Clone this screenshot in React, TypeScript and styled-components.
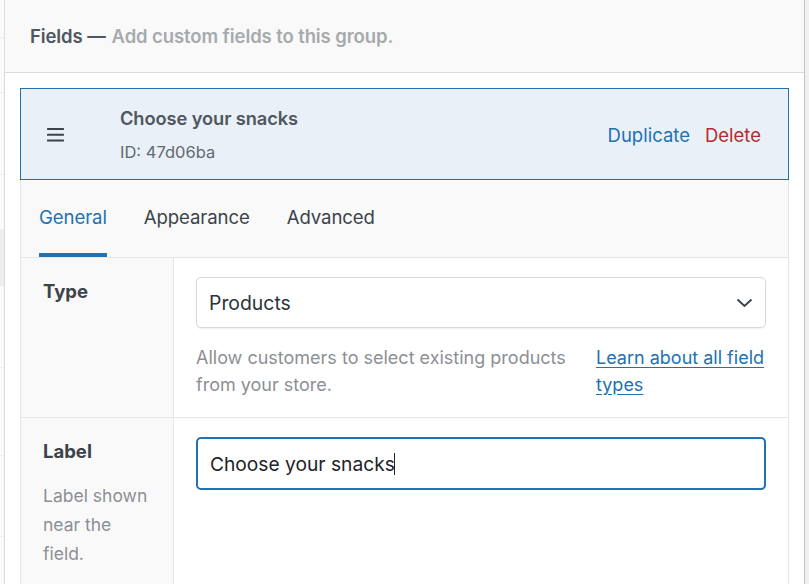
import styled, { createGlobalStyle } from "styled-components";

const GlobalStyle = createGlobalStyle`
  html, body {
    margin: 0;
    padding: 0;
    background: #f0f0f0;
  }
  body {
    font-family: Inter, "Noto Sans", "Liberation Sans", sans-serif;
    -webkit-font-smoothing: antialiased;
  }
`;

const Page = styled.div`
  display: flex;
  height: 584px;
  overflow: hidden;
  background: #f0f0f0;
`;

const SideStrip = styled.div`
  width: 4px;
  flex: none;
  background: #fafafa;
  border-right: 1px solid #dcdcde;
  display: flex;
  flex-direction: column;
`;

const StripRow = styled.div<{ $h: number; $shade?: boolean }>`
  height: ${p => p.$h}px;
  flex: none;
  border-bottom: 1px solid #ececec;
  background: ${p => (p.$shade ? "#ededed" : "transparent")};
`;

const Panel = styled.div`
  flex: 1;
  display: flex;
  flex-direction: column;
  background: #fff;
  border-right: 1px solid #c3c4c7;
  min-width: 0;
`;

const PanelHeader = styled.div`
  height: 72px;
  flex: none;
  display: flex;
  align-items: center;
  padding: 0 25px;
  background: #f9f9f9;
  border-bottom: 1px solid #dcdcde;
  font-size: 18.5px;
  font-weight: 600;
  color: #50575e;
  letter-spacing: -0.1px;
`;

const Muted = styled.span`
  color: #a7aaad;
  margin-left: 6px;
`;

const PanelBody = styled.div`
  padding: 15px 15px 0 15px;
`;

const FieldCard = styled.div`
  display: flex;
  flex-direction: column;
`;

const CardHeader = styled.div`
  height: 90px;
  display: flex;
  align-items: center;
  background: #e9f0f8;
  border: 1px solid #2271b1;
  padding: 0 27px 0 26px;
`;

const Handle = styled.svg`
  width: 18px;
  height: 14px;
  flex: none;
  color: #3c434a;
  margin-top: 2px;
`;

const TitleBlock = styled.div`
  flex: 1;
  margin-left: 55px;
  display: flex;
  flex-direction: column;
  gap: 13px;
  margin-top: 1px;
`;

const Title = styled.div`
  font-size: 18.3px;
  line-height: 22px;
  font-weight: 600;
  color: #50575e;
  letter-spacing: -0.1px;
`;

const FieldId = styled.div`
  font-size: 16.5px;
  line-height: 20px;
  color: #646970;
`;

const Actions = styled.div`
  display: flex;
  gap: 15px;
  font-size: 18.5px;
  margin-top: 1px;
`;

const ActionLink = styled.a<{ $danger?: boolean }>`
  color: ${p => (p.$danger ? "#b32d2e" : "#2271b1")};
  text-decoration: none;
  cursor: pointer;
`;

const TabBar = styled.div`
  height: 77px;
  display: flex;
  gap: 37px;
  padding: 0 18px;
  background: #f9f9f9;
  border-left: 1px solid #e5e5e5;
  border-right: 1px solid #e5e5e5;
  border-bottom: 1px solid #e5e5e5;
`;

const Tab = styled.div<{ $active?: boolean }>`
  display: flex;
  align-items: center;
  font-size: 18.6px;
  color: ${p => (p.$active ? "#2271b1" : "#3c434a")};
  border-bottom: 4px solid ${p => (p.$active ? "#2271b1" : "transparent")};
  letter-spacing: -0.1px;
`;

const Row = styled.div`
  display: grid;
  grid-template-columns: 153px 1fr;
  border-left: 1px solid #e5e5e5;
  border-right: 1px solid #e5e5e5;
  border-bottom: 1px solid #e5e5e5;
  &:last-child {
    border-bottom: none;
  }
`;

const LabelCell = styled.div`
  background: #f9f9f9;
  border-right: 1px solid #e5e5e5;
  padding: 22px 22px 20px 22px;
`;

const LabelTitle = styled.div`
  font-size: 18.5px;
  font-weight: 650;
  color: #3c434a;
`;

const LabelHint = styled.div`
  margin-top: 19px;
  font-size: 17.5px;
  line-height: 29px;
  color: #8c8f94;
`;

const ContentCell = styled.div`
  padding: 19px 22px 19px 22px;
  display: flex;
  flex-direction: column;
  gap: 17px;
`;

const SelectBox = styled.div`
  height: 49px;
  display: flex;
  align-items: center;
  justify-content: space-between;
  padding: 0 12px;
  border: 1px solid #d7d8da;
  border-radius: 5px;
  box-shadow: 0 1px 2px rgba(0, 0, 0, 0.06);
  background: #fff;
  font-size: 19.4px;
  color: #2c3338;
`;

const Chevron = styled.svg`
  width: 17px;
  height: 10px;
  color: #3c434a;
`;

const HelpRow = styled.div`
  display: flex;
  justify-content: space-between;
  gap: 24px;
  font-size: 18px;
  line-height: 27px;
  margin-top: -1px;
`;

const HelpText = styled.div`
  color: #8c8f94;
  flex: 1;
`;

const HelpLink = styled.a`
  color: #2271b1;
  text-decoration: underline;
  text-underline-offset: 3px;
  width: 170px;
  flex: none;
`;

const TextInput = styled.div`
  height: 49px;
  display: flex;
  align-items: center;
  padding: 0 12px;
  border: 2px solid #2271b1;
  border-radius: 5px;
  background: #fff;
  font-size: 19.2px;
  color: #1d2327;
`;

const Caret = styled.span`
  display: inline-block;
  width: 1.5px;
  height: 22px;
  background: #1d2327;
  margin-left: -1px;
`;

const strip: { h: number; shade?: boolean }[] = [
  { h: 37 },
  { h: 54 },
  { h: 81 },
  { h: 54 },
  { h: 55, shade: true },
  { h: 81 },
  { h: 87 },
  { h: 80 },
];

export default function App() {
  return (
    <>
      <GlobalStyle />
      <Page>
        <SideStrip>
          {strip.map((r, i) => (
            <StripRow key={i} $h={r.h} $shade={r.shade} />
          ))}
        </SideStrip>
        <Panel>
          <PanelHeader>
            Fields —<Muted>Add custom fields to this group.</Muted>
          </PanelHeader>
          <PanelBody>
            <FieldCard>
              <CardHeader>
                <Handle viewBox="0 0 18 14">
                  <rect x="0" y="0" width="17" height="2" rx="0.5" fill="currentColor" />
                  <rect x="0" y="5.7" width="17" height="2" rx="0.5" fill="currentColor" />
                  <rect x="0" y="11.4" width="17" height="2" rx="0.5" fill="currentColor" />
                </Handle>
                <TitleBlock>
                  <Title>Choose your snacks</Title>
                  <FieldId>ID: 47d06ba</FieldId>
                </TitleBlock>
                <Actions>
                  <ActionLink>Duplicate</ActionLink>
                  <ActionLink $danger>Delete</ActionLink>
                </Actions>
              </CardHeader>
              <TabBar>
                <Tab $active>General</Tab>
                <Tab>Appearance</Tab>
                <Tab>Advanced</Tab>
              </TabBar>
              <Row>
                <LabelCell>
                  <LabelTitle>Type</LabelTitle>
                </LabelCell>
                <ContentCell>
                  <SelectBox>
                    Products
                    <Chevron viewBox="0 0 17 10" fill="none">
                      <path d="M1.5 1.5 L8.5 8 L15.5 1.5" stroke="currentColor" strokeWidth="2" />
                    </Chevron>
                  </SelectBox>
                  <HelpRow>
                    <HelpText>Allow customers to select existing products from your store.</HelpText>
                    <HelpLink>Learn about all field types</HelpLink>
                  </HelpRow>
                </ContentCell>
              </Row>
              <Row>
                <LabelCell>
                  <LabelTitle>Label</LabelTitle>
                  <LabelHint>Label shown near the field.</LabelHint>
                </LabelCell>
                <ContentCell>
                  <TextInput>
                    Choose your snacks<Caret />
                  </TextInput>
                </ContentCell>
              </Row>
            </FieldCard>
          </PanelBody>
        </Panel>
        <div style={{ width: 4, flex: "none" }} />
      </Page>
    </>
  );
}
